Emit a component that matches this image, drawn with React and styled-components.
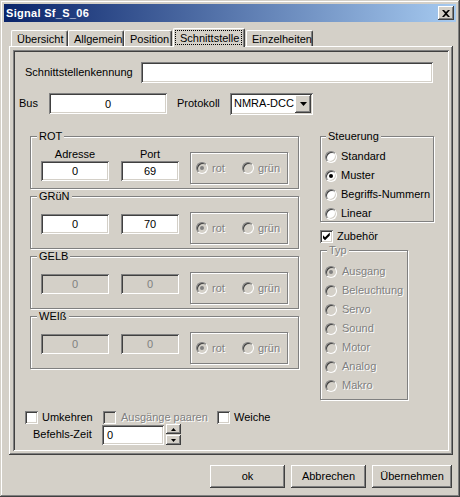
import React from 'react';
import styled, { createGlobalStyle, css } from 'styled-components';

const FACE = '#d4d0c8';
const LIGHT = '#ffffff';
const SHADOW = '#808080';
const DARK = '#404040';

const Global = createGlobalStyle`
  html, body { margin: 0; padding: 0; background: ${FACE}; }
  body {
    font-family: "Liberation Sans", Arial, sans-serif;
    font-size: 11px;
    line-height: 13px;
    color: #000;
  }
  * { box-sizing: border-box; }
`;

const raised = css`
  box-shadow: inset -1px -1px 0 ${DARK}, inset 1px 1px 0 ${LIGHT},
    inset -2px -2px 0 ${SHADOW}, inset 2px 2px 0 ${FACE};
`;

const sunken = css`
  box-shadow: inset 1px 1px 0 ${SHADOW}, inset -1px -1px 0 ${LIGHT},
    inset 2px 2px 0 ${DARK}, inset -2px -2px 0 ${FACE};
`;

const etched = css`
  border: 1px solid ${SHADOW};
  box-shadow: inset 1px 1px 0 ${LIGHT}, 1px 1px 0 ${LIGHT};
`;

const disabledText = css`
  color: ${SHADOW};
  text-shadow: 1px 1px 0 ${LIGHT};
`;

const Window = styled.div`
  width: 460px;
  height: 497px;
  background: ${FACE};
  padding: 4px;
  display: flex;
  flex-direction: column;
  box-shadow: inset -1px -1px 0 ${DARK}, inset 1px 1px 0 ${FACE},
    inset -2px -2px 0 ${SHADOW}, inset 2px 2px 0 ${LIGHT};
`;

const TitleBar = styled.div`
  height: 18px;
  flex: none;
  display: flex;
  align-items: center;
  justify-content: space-between;
  padding: 0 2px;
  background: linear-gradient(to right, #0a246a, #a6caf0);
`;

const TitleText = styled.span`
  color: #fff;
  font-weight: bold;
  font-size: 11px;
  line-height: 13px;
  letter-spacing: 0.3px;
`;

const CloseButton = styled.div`
  width: 16px;
  height: 14px;
  background: ${FACE};
  display: flex;
  align-items: center;
  justify-content: center;
  ${raised};
`;

const TabArea = styled.div`
  margin: 6px 0 0 5px;
  display: flex;
  flex-direction: column;
`;

const TabStrip = styled.div`
  display: flex;
  align-items: flex-end;
  height: 18px;
  padding-left: 2px;
`;

const Tab = styled.div`
  position: relative;
  width: ${(p) => p.$w}px;
  margin-left: ${(p) => p.$ml || 0}px;
  height: ${(p) => (p.$active ? 19 : 16)}px;
  margin-bottom: ${(p) => (p.$active ? -1 : 0)}px;
  z-index: ${(p) => (p.$active ? 2 : 0)};
  background: ${FACE};
  border-top: 1px solid ${LIGHT};
  border-left: 1px solid ${LIGHT};
  border-right: 1px solid ${DARK};
  border-radius: 2px 2px 0 0;
  box-shadow: inset -1px 0 0 ${SHADOW};
  padding: ${(p) => (p.$active ? '1px 2px 2px 1px' : '2px 0 0 5px')};
  display: flex;
  white-space: nowrap;
`;

const FocusLabel = styled.span`
  flex: 1;
  border: 1px dotted #000;
  padding: 1px 0 0 4px;
`;

const Panel = styled.div`
  width: 444px;
  height: 409px;
  padding: 4px;
  position: relative;
  z-index: 1;
  background: ${FACE};
  ${raised};
`;

const InnerFrame = styled.div`
  width: 100%;
  height: 100%;
  padding: 2px;
  display: flex;
  flex-direction: column;
  ${sunken};
`;

const Row = styled.div`
  display: flex;
  align-items: center;
  height: ${(p) => p.$h}px;
  margin-top: ${(p) => p.$mt || 0}px;
  padding-left: ${(p) => p.$pl || 0}px;
  flex: none;
`;

const Label = styled.span`
  width: ${(p) => (p.$w ? `${p.$w}px` : 'auto')};
  margin-left: ${(p) => p.$ml || 0}px;
  flex: none;
  white-space: nowrap;
`;

const TextBox = styled.div`
  width: ${(p) => p.$w}px;
  height: ${(p) => p.$h || 20}px;
  flex: none;
  background: ${(p) => (p.$disabled ? FACE : LIGHT)};
  color: ${(p) => (p.$disabled ? SHADOW : '#000')};
  display: flex;
  align-items: center;
  justify-content: ${(p) => (p.$left ? 'flex-start' : 'center')};
  padding: 1px 3px 0 ${(p) => (p.$left ? 5 : 3)}px;
  ${sunken};
`;

const Combo = styled.div`
  width: 83px;
  height: 22px;
  flex: none;
  background: ${LIGHT};
  display: flex;
  align-items: center;
  justify-content: space-between;
  padding: 2px;
  ${sunken};
`;

const ComboText = styled.span`
  padding-left: 2px;
`;

const ComboButton = styled.div`
  width: 16px;
  height: 18px;
  background: ${FACE};
  display: flex;
  align-items: center;
  justify-content: center;
  ${raised};
`;

const MainArea = styled.div`
  display: flex;
  align-items: flex-start;
  margin-top: 21px;
  padding-left: 15px;
  flex: none;
`;

const LeftCol = styled.div`
  display: flex;
  flex-direction: column;
  gap: 7px;
  width: 269px;
`;

const RightCol = styled.div`
  display: flex;
  flex-direction: column;
  margin-left: 21px;
  width: 114px;
`;

const GroupBox = styled.div`
  position: relative;
  width: ${(p) => p.$w}px;
  height: ${(p) => p.$h}px;
  margin-top: ${(p) => p.$mt || 0}px;
  flex: none;
  ${etched};
`;

const Legend = styled.span`
  position: absolute;
  top: -7px;
  left: ${(p) => p.$left || 6}px;
  padding: 0 2px;
  background: ${FACE};
  white-space: nowrap;
  ${(p) => p.$disabled && disabledText};
`;

const GroupBody = styled.div`
  display: flex;
  align-items: flex-start;
  padding: 15px 0 0 10px;
`;

const FieldCol = styled.div`
  display: flex;
  flex-direction: column;
  align-items: center;
  width: ${(p) => p.$w}px;
  margin-top: ${(p) => p.$mt}px;
  margin-right: ${(p) => p.$mr || 0}px;
`;

const FieldLabel = styled.span`
  height: 13px;
`;

const RadioFrame = styled.div`
  width: 98px;
  height: 32px;
  display: flex;
  align-items: center;
  padding-left: 5px;
  ${etched};
`;

const RadioItem = styled.div`
  display: flex;
  align-items: center;
  gap: ${(p) => p.$gap || 4}px;
  width: ${(p) => (p.$w ? `${p.$w}px` : 'auto')};
  height: ${(p) => p.$h || 13}px;
  flex: none;
  white-space: nowrap;
`;

const RadioCircle = styled.span`
  position: relative;
  width: 12px;
  height: 12px;
  flex: none;
  border-radius: 50%;
  border: 1px solid;
  border-color: ${SHADOW} ${LIGHT} ${LIGHT} ${SHADOW};
  background: ${(p) => (p.$disabled ? FACE : LIGHT)};
  box-shadow: inset 1px 1px 0 ${DARK}, inset -1px -1px 0 ${FACE};
  &::after {
    content: '';
    display: ${(p) => (p.$checked ? 'block' : 'none')};
    position: absolute;
    left: 3px;
    top: 3px;
    width: 4px;
    height: 4px;
    border-radius: 50%;
    background: ${(p) => (p.$disabled ? SHADOW : '#000')};
  }
`;

const ItemText = styled.span`
  ${(p) => p.$disabled && disabledText};
`;

const RadioList = styled.div`
  display: flex;
  flex-direction: column;
  padding: ${(p) => p.$pt}px 0 0 4px;
`;

const CheckBox = styled.span`
  width: 13px;
  height: 13px;
  flex: none;
  display: flex;
  align-items: center;
  justify-content: center;
  background: ${(p) => (p.$disabled ? FACE : LIGHT)};
  ${sunken};
`;

const CheckItem = styled.div`
  display: flex;
  align-items: center;
  gap: ${(p) => p.$gap || 4}px;
  width: ${(p) => (p.$w ? `${p.$w}px` : 'auto')};
  flex: none;
  white-space: nowrap;
`;

const SpinButtons = styled.div`
  display: flex;
  flex-direction: column;
  gap: 1px;
  margin-left: 2px;
`;

const SpinButton = styled.div`
  width: 15px;
  height: 10px;
  background: ${FACE};
  display: flex;
  align-items: center;
  justify-content: center;
  ${raised};
`;

const ButtonRow = styled.div`
  display: flex;
  justify-content: flex-end;
  gap: 6px;
  margin-top: 10px;
  padding-right: 4px;
`;

const Button = styled.div`
  width: ${(p) => p.$w || 75}px;
  height: 23px;
  background: ${FACE};
  display: flex;
  align-items: center;
  justify-content: center;
  ${raised};
`;

const CloseGlyph = () => (
  <svg width="8" height="7" viewBox="0 0 8 7">
    <path d="M0 0h2l2 2 2-2h2L5 3.5 8 7H6L4 5 2 7H0l3-3.5z" fill="#000" />
  </svg>
);

const DownArrow = ({ w = 7, h = 4 }) => (
  <svg width={w} height={h} viewBox={`0 0 ${w} ${h}`}>
    <path d={`M0 0H${w}L${w / 2} ${h}Z`} fill="#000" />
  </svg>
);

const UpArrow = ({ w = 5, h = 3 }) => (
  <svg width={w} height={h} viewBox={`0 0 ${w} ${h}`}>
    <path d={`M0 ${h}H${w}L${w / 2} 0Z`} fill="#000" />
  </svg>
);

const CheckMark = () => (
  <svg width="9" height="9" viewBox="0 0 9 9">
    <path d="M1 3.2 3 5.2 7.8 0.4V3.4L3 8.2 1 6.2Z" fill="#000" />
  </svg>
);

const Radio = ({ label, checked, disabled, w, gap }) => (
  <RadioItem $w={w} $gap={gap} $h={19}>
    <RadioCircle $checked={checked} $disabled={disabled} />
    <ItemText $disabled={disabled}>{label}</ItemText>
  </RadioItem>
);

const ColorGroup = ({ name, values, disabled, labels }) => (
  <GroupBox $w={269} $h={53}>
    <Legend>{name}</Legend>
    <GroupBody>
      <FieldCol $w={68} $mt={labels ? -4 : 2} $mr={12}>
        {labels && <FieldLabel>Adresse</FieldLabel>}
        <TextBox $w={68} $disabled={disabled}>{values[0]}</TextBox>
      </FieldCol>
      <FieldCol $w={58} $mt={labels ? -4 : 2} $mr={11}>
        {labels && <FieldLabel>Port</FieldLabel>}
        <TextBox $w={58} $disabled={disabled}>{values[1]}</TextBox>
      </FieldCol>
      <RadioFrame>
        <Radio label="rot" checked disabled w={46} />
        <Radio label="grün" disabled />
      </RadioFrame>
    </GroupBody>
  </GroupBox>
);

const tabs = [
  { label: 'Übersicht', w: 57 },
  { label: 'Allgemein', w: 56 },
  { label: 'Position', w: 48 },
  { label: 'Schnittstelle', w: 72, active: true, ml: 1 },
  { label: 'Einzelheiten', w: 67, ml: 1 },
];

const steuerung = ['Standard', 'Muster', 'Begriffs-Nummern', 'Linear'];
const typen = ['Ausgang', 'Beleuchtung', 'Servo', 'Sound', 'Motor', 'Analog', 'Makro'];

export default function App() {
  return (
    <>
      <Global />
      <Window>
        <TitleBar>
          <TitleText>Signal Sf_S_06</TitleText>
          <CloseButton>
            <CloseGlyph />
          </CloseButton>
        </TitleBar>
        <TabArea>
          <TabStrip>
            {tabs.map((t) => (
              <Tab key={t.label} $w={t.w} $ml={t.ml} $active={t.active}>
                {t.active ? <FocusLabel>{t.label}</FocusLabel> : t.label}
              </Tab>
            ))}
          </TabStrip>
          <Panel>
            <InnerFrame>
              <Row $h={21} $mt={10} $pl={10}>
                <Label $w={116}>Schnittstellenkennung</Label>
                <TextBox $w={292} $h={21} />
              </Row>
              <Row $h={23} $mt={9} $pl={4}>
                <Label $w={30}>Bus</Label>
                <TextBox $w={118} $h={21}>0</TextBox>
                <Label $w={53} $ml={10}>Protokoll</Label>
                <Combo>
                  <ComboText>NMRA-DCC</ComboText>
                  <ComboButton>
                    <DownArrow />
                  </ComboButton>
                </Combo>
              </Row>
              <MainArea>
                <LeftCol>
                  <ColorGroup name="ROT" values={['0', '69']} labels />
                  <ColorGroup name="GRüN" values={['0', '70']} />
                  <ColorGroup name="GELB" values={['0', '0']} disabled />
                  <ColorGroup name="WEIß" values={['0', '0']} disabled />
                </LeftCol>
                <RightCol>
                  <GroupBox $w={114} $h={86}>
                    <Legend $left={5}>Steuerung</Legend>
                    <RadioList $pt={10}>
                      {steuerung.map((s) => (
                        <Radio key={s} label={s} checked={s === 'Muster'} />
                      ))}
                    </RadioList>
                  </GroupBox>
                  <Row $h={13} $mt={8}>
                    <CheckItem>
                      <CheckBox>
                        <CheckMark />
                      </CheckBox>
                      <span>Zubehör</span>
                    </CheckItem>
                  </Row>
                  <GroupBox $w={88} $h={150} $mt={7}>
                    <Legend $left={6} $disabled>Typ</Legend>
                    <RadioList $pt={11}>
                      {typen.map((s) => (
                        <Radio key={s} label={s} checked={s === 'Ausgang'} disabled gap={5} />
                      ))}
                    </RadioList>
                  </GroupBox>
                </RightCol>
              </MainArea>
              <Row $h={13} $mt={11} $pl={10}>
                <CheckItem $w={78}>
                  <CheckBox />
                  <span>Umkehren</span>
                </CheckItem>
                <CheckItem $w={114} $gap={5}>
                  <CheckBox $disabled />
                  <ItemText $disabled>Ausgänge paaren</ItemText>
                </CheckItem>
                <CheckItem>
                  <CheckBox />
                  <span>Weiche</span>
                </CheckItem>
              </Row>
              <Row $h={21} $pl={18}>
                <Label $w={69}>Befehls-Zeit</Label>
                <TextBox $w={62} $h={20} $left>0</TextBox>
                <SpinButtons>
                  <SpinButton>
                    <UpArrow />
                  </SpinButton>
                  <SpinButton>
                    <DownArrow w={5} h={3} />
                  </SpinButton>
                </SpinButtons>
              </Row>
            </InnerFrame>
          </Panel>
        </TabArea>
        <ButtonRow>
          <Button>ok</Button>
          <Button>Abbrechen</Button>
          <Button $w={80}>Übernehmen</Button>
        </ButtonRow>
      </Window>
    </>
  );
}
